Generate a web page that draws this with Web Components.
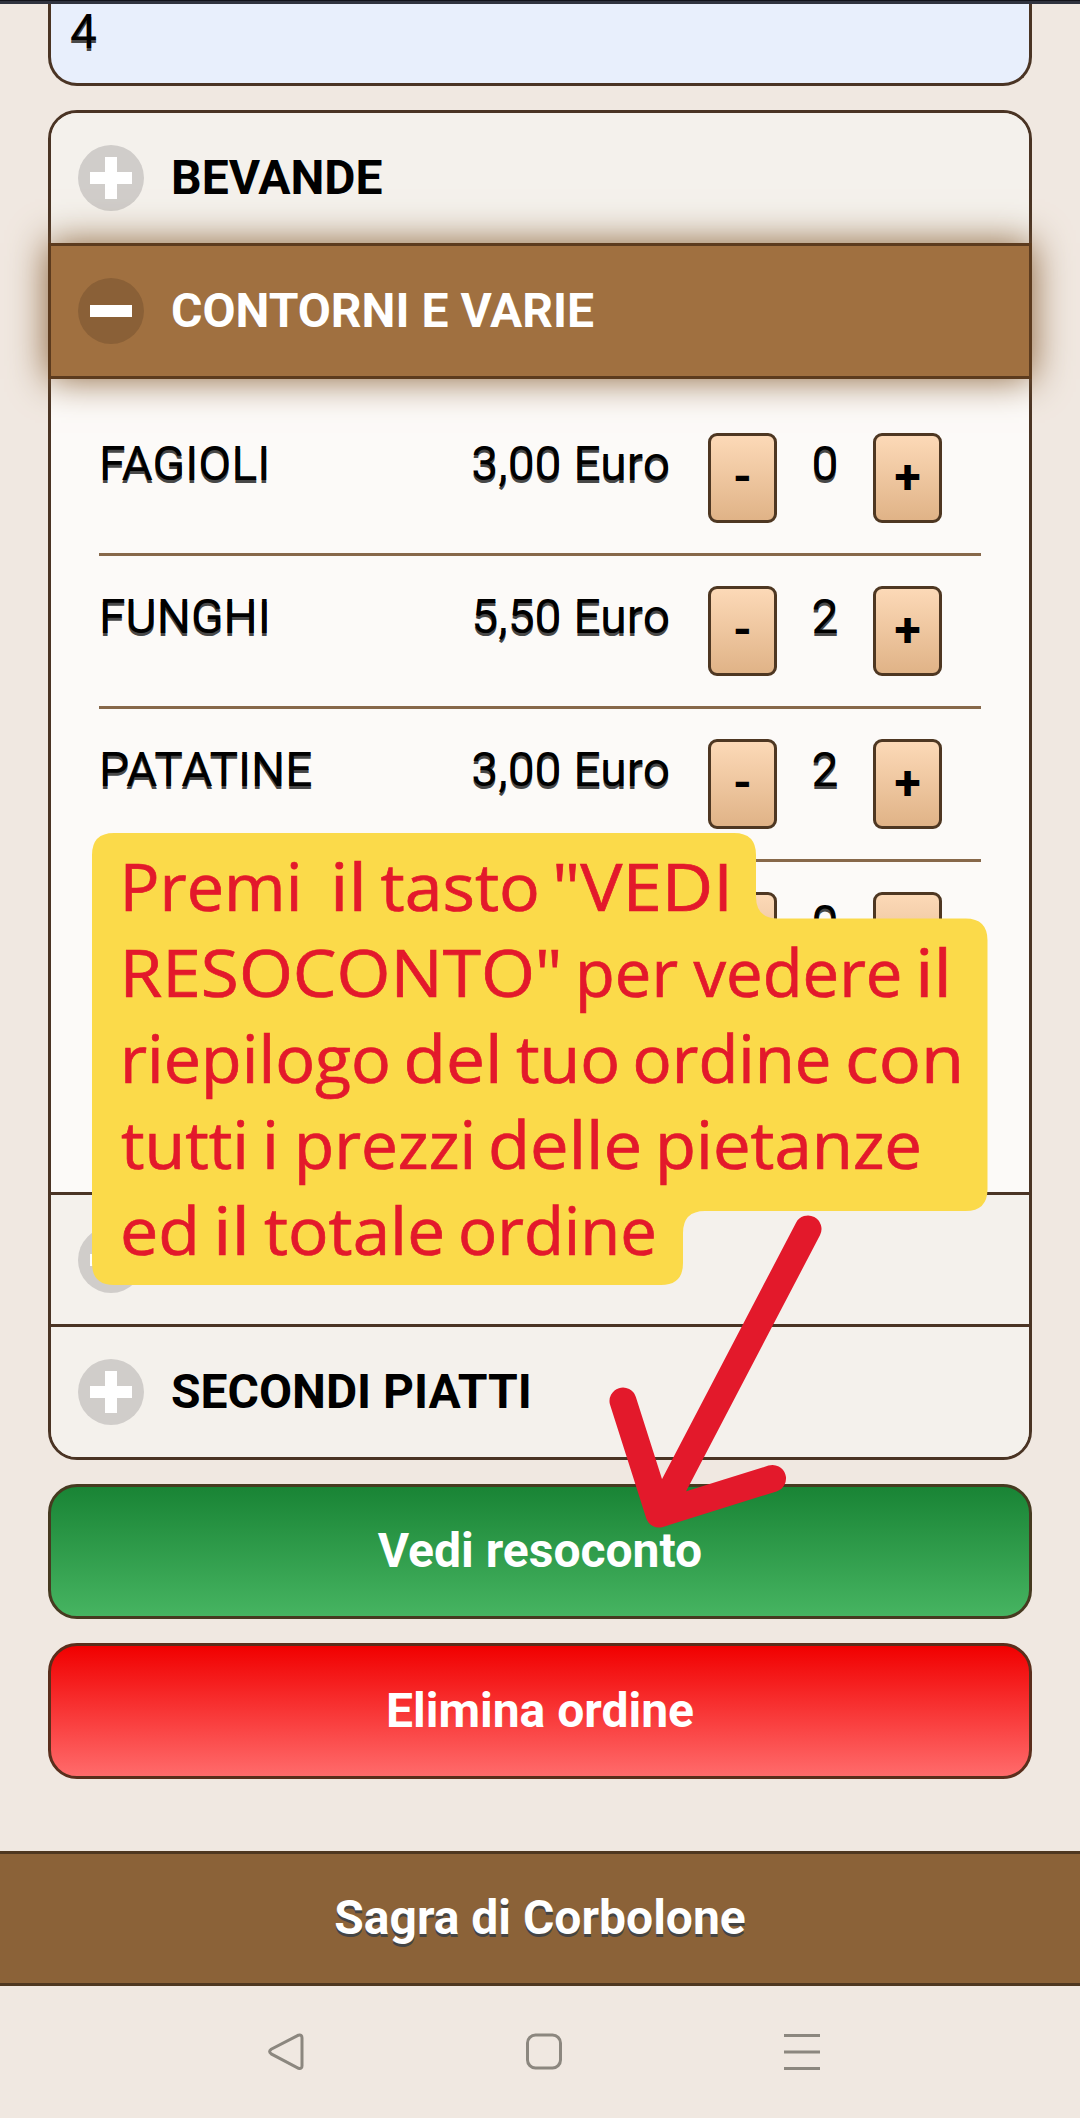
<!DOCTYPE html>
<html lang="it">
<head>
<meta charset="utf-8">
<title>Sagra di Corbolone</title>
<style>
  html, body { margin: 0; padding: 0; }
  body { width: 1080px; height: 2118px; overflow: hidden; background: #f0e8e1; font-family: Roboto, "Liberation Sans", sans-serif; font-size: 48px; color: #000; }
</style>
</head>
<body>
<order-page></order-page>
<script>
const define = (name, html) => customElements.define(name, class extends HTMLElement {
  constructor() {
    super();
    this.attachShadow({ mode: 'open' }).innerHTML = html;
  }
});

define('text-field', `
  <style>
    :host { display: flex; align-items: flex-end; box-sizing: border-box; height: 82px; padding: 0 0 21px 19px;
      border: 3px solid #4a3424; border-top: 0; border-radius: 0 0 29px 29px; background: #e8effc;
      line-height: 60px; text-shadow: 0 3px 0 #484848; }
  </style><slot></slot>`);

customElements.define('accordion-header', class extends HTMLElement {
  connectedCallback() {
    const open = this.hasAttribute('open');
    this.attachShadow({ mode: 'open' }).innerHTML = `
      <style>
        :host { display: flex; align-items: center; gap: 27px; box-sizing: border-box; height: 130px; padding: 0 27px;
          background: #f4f1ec; font-weight: 700; line-height: 60px; }
        :host([open]) { position: relative; z-index: 1; height: 136px; margin: 0 -3px; padding: 0 30px; color: #fff;
          background: #a07040; border: solid #5c3b1e; border-width: 3px 0; box-shadow: 0 0 36px #8b6238; }
        :host([open])::before, :host([open])::after { content: ''; position: absolute; top: 0; bottom: 0; width: 3px; background: #5c3b1e; }
        :host([open])::before { left: 0; }
        :host([open])::after { right: 0; }
        svg { flex: none; width: 66px; height: 66px; }
      </style>
      <svg viewBox="0 0 66 66"><circle cx="33" cy="33" r="33" fill="${open ? '#8a6037' : '#d0cdca'}"/>
        <path d="M12 27h42v12H12z${open ? '' : 'M27 12h12v42H27z'}" fill="#fff"/></svg>
      <span><slot></slot></span>`;
  }
});

define('step-button', `
  <style>
    :host { display: flex; flex: none; align-items: center; justify-content: center; box-sizing: border-box; width: 69px; height: 90px;
      padding-bottom: 2px; border: 3px solid #4e3722; border-radius: 9px; background: linear-gradient(#fcd9b7, #e0b387);
      font-weight: 700; line-height: 60px; }
  </style><slot></slot>`);

customElements.define('menu-item', class extends HTMLElement {
  connectedCallback() {
    const covered = this.hasAttribute('covered');
    this.attachShadow({ mode: 'open' }).innerHTML = `
      <style>
        :host { display: flex; box-sizing: border-box; height: 153px; padding: 30px 39px 0 0; border-bottom: 3px solid #87684a; }
        span { line-height: 62px; height: 62px; text-shadow: 0 3px 0 #484848; white-space: nowrap; }
        .name { flex: 1; }
        .price { margin-right: 38px; }
        .count { width: 96px; text-align: center; }
      </style>
      <span class="name"><slot></slot></span>
      <span class="price">${this.getAttribute('price') || ''}</span>
      <step-button>${covered ? '' : '-'}</step-button>
      <span class="count">${this.getAttribute('count')}</span>
      <step-button>${covered ? '' : '+'}</step-button>`;
  }
});

define('order-accordion', `
  <style>
    :host { display: flex; flex-direction: column; margin-top: 24px; height: 1350px; box-sizing: border-box;
      border: 3px solid #4a3424; border-radius: 29px; }
    .first { border-radius: 26px 26px 0 0; }
    .last { border-radius: 0 0 26px 26px; }
    .items { flex: 1; padding: 24px 48px 0; background: #fcfaf8; }
    .rule { height: 3px; background: #4a3424; }
  </style>
  <accordion-header class="first">BEVANDE</accordion-header>
  <accordion-header open>CONTORNI E VARIE</accordion-header>
  <div class="items">
    <menu-item price="3,00 Euro" count="0">FAGIOLI</menu-item>
    <menu-item price="5,50 Euro" count="2">FUNGHI</menu-item>
    <menu-item price="3,00 Euro" count="2">PATATINE</menu-item>
    <menu-item covered count="0"></menu-item>
  </div>
  <div class="rule"></div>
  <accordion-header style="height:129px"></accordion-header>
  <div class="rule"></div>
  <accordion-header class="last">SECONDI PIATTI</accordion-header>`);

define('action-button', `
  <style>
    :host { display: flex; align-items: center; justify-content: center; box-sizing: border-box; height: 135px; margin-top: 24px;
      padding-bottom: 1px; border: 3px solid #463a20; border-radius: 29px;
      background: linear-gradient(#198435, #46b461); color: #fff; font-weight: 700; line-height: 60px; }
    :host([danger]) { height: 136px; padding-bottom: 0; border-color: #5a2e1c; background: linear-gradient(#f10000, #ff6b6b); }
  </style><slot></slot>`);

define('page-footer', `
  <style>
    :host { display: flex; align-items: center; justify-content: center; box-sizing: border-box; height: 135px; margin-top: 72px;
      padding-bottom: 2px; border: solid #4e3720; border-width: 3px 0; background: #8b6238; color: #fff; font-weight: 700;
      line-height: 60px; text-shadow: 0 3px 0 #444; }
  </style><slot></slot>`);

define('system-nav', `
  <style>
    :host { display: flex; justify-content: space-between; align-items: center; height: 132px; padding: 0 259px 0 267px; }
    svg { width: 38px; height: 38px; fill: none; stroke: #8c877f; stroke-width: 3; }
  </style>
  <svg viewBox="0 0 38 38"><path d="M31.500 2.200 4.200 16.200Q1 18.500 4.200 20.900L31.500 35.300Q35 36.300 35 32.700V5.100Q35 1.300 31.500 2.200Z"/></svg>
  <svg viewBox="0 0 38 38"><rect x="2.500" y="2" width="33" height="33" rx="8"/></svg>
  <svg viewBox="0 0 38 38"><path d="M1 2.500h36M1 19h36M1 35.500h36"/></svg>`);

// Each caption line is a baseline plus its words as [text, x, advance].
const captionLines = [
  [911, ['Premi  ', 119.5, 183], ['il ', 330, 37], ['tasto ', 380.5, 159.5], ['"VEDI', 552, 181]],
  [997, ['RESOCONTO" ', 119.5, 443], ['per ', 575, 103], ['vedere ', 693.5, 209], ['il', 915, 37]],
  [1083, ['riepilogo ', 120, 271], ['del ', 403.5, 99], ['tuo ', 516, 104], ['ordine ', 632.5, 199], ['con', 845, 119]],
  [1169, ['tutti ', 121, 128], ['i ', 262, 17], ['prezzi ', 294, 182], ['delle ', 488, 154], ['pietanze', 655, 267]],
  [1255, ['ed ', 120, 80], ['il ', 213, 37], ['totale ', 264, 181], ['ordine', 458, 199]]
];
const captionText = captionLines.map(([y, ...words]) => `<text y="${y}">` + words.map(([w, x, len]) => {
  const word = w.trimEnd();
  return `<tspan x="${x}" textLength="${len}" lengthAdjust="spacingAndGlyphs">${word}</tspan>${w.slice(word.length)}`;
}).join('') + '</text>').join('');

define('tutorial-note', `
  <style>
    :host { position: absolute; left: 0; top: 0; width: 1080px; height: 2118px; pointer-events: none; }
    svg { display: block; }
    text { font: 66px "Open Sans", sans-serif; fill: #e3192b; stroke: #e3192b; stroke-width: .7px; white-space: pre; }
  </style>
  <svg width="1080" height="2118" viewBox="0 0 1080 2118">
    <path fill="#fbda4a" d="M114 833H734Q756 833 756 855V896.500Q756 918.500 778 918.500H965.500Q987.500 918.500 987.500 940.500V1189Q987.500 1211 965.500 1211H705Q683 1211 683 1233V1263Q683 1285 661 1285H114Q92 1285 92 1263V855Q92 833 114 833Z"/>
    ${captionText}
    <path d="M808 1229 659 1514M623 1401 659 1514 772.500 1478.500" fill="none" stroke="#e3192b" stroke-width="27" stroke-linecap="round" stroke-linejoin="round"/>
  </svg>`);

define('order-page', `
  <style>
    :host { display: block; position: relative; height: 2118px; overflow: hidden; }
    .status { height: 4px; background: linear-gradient(#12131a 25%, #30333f 25%); }
    main { padding: 0 48px; }
  </style>
  <div class="status"></div>
  <main>
    <text-field>4</text-field>
    <order-accordion></order-accordion>
    <action-button>Vedi resoconto</action-button>
    <action-button danger>Elimina ordine</action-button>
  </main>
  <page-footer>Sagra di Corbolone</page-footer>
  <system-nav></system-nav>
  <tutorial-note></tutorial-note>`);
</script>
</body>
</html>
